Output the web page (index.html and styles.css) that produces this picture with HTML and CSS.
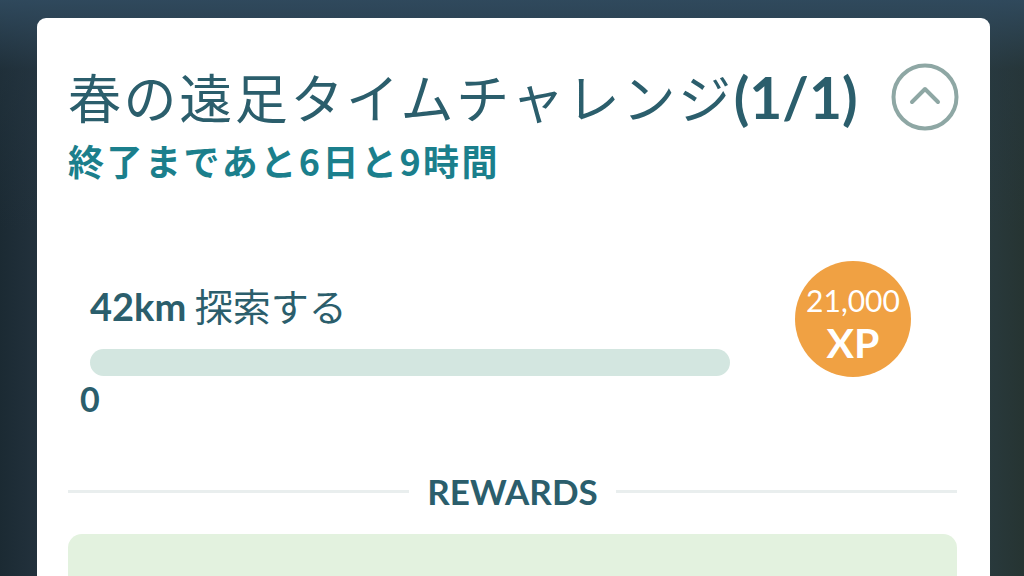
FILE: index.html
```html
<!DOCTYPE html>
<html lang="ja">
<head>
<meta charset="utf-8">
<link rel="stylesheet" href="styles.css">
</head>
<body>
<div class="screen">
  <div class="card">
    <div class="header">
      <div class="titles">
        <h1 class="title">春の遠足タイムチャレンジ<span class="count">(1/1)</span></h1>
        <div class="remaining">終了まであと6日と9時間</div>
      </div>
      <button class="collapse" aria-label="collapse">
        <svg width="70" height="70" viewBox="0 0 70 70">
          <circle cx="35" cy="35" r="31.5" fill="none" stroke="#8ea7a4" stroke-width="4"/>
          <path d="M22 40 L35 27 L48 40" fill="none" stroke="#8ea7a4" stroke-width="4" stroke-linecap="round" stroke-linejoin="round"/>
        </svg>
      </button>
    </div>
    <div class="task">
      <div class="task-main">
        <div class="task-name"><span class="km">42km</span> 探索する</div>
        <div class="bar"><div class="fill" style="width:0%"></div></div>
        <div class="progress-num">0</div>
      </div>
      <div class="xp">
        <div class="xp-amount">21,000</div>
        <div class="xp-label">XP</div>
      </div>
    </div>
    <div class="divider">
      <span class="line"></span>
      <span class="divider-text">REWARDS</span>
      <span class="line"></span>
    </div>
    <div class="rewards-box"></div>
  </div>
</div>
</body>
</html>
```
FILE: styles.css
```css
* { box-sizing: border-box; }
html, body {
  margin: 0;
  padding: 0;
  width: 1024px;
  height: 576px;
  overflow: hidden;
}
body {
  font-family: "Lato", "Noto Sans CJK JP", sans-serif;
  background: linear-gradient(90deg, #1b2a33 0%, #23323d 4%, #263845 50%, #293a3e 96%, #263432 100%);
}
.screen {
  height: 576px;
  padding: 18px 34px 0 37px;
  background: linear-gradient(180deg, rgba(48,74,94,0.95) 0%, rgba(38,56,68,0.4) 12%, rgba(0,0,0,0) 40%);
}
.card {
  width: 953px;
  height: 600px;
  background: #ffffff;
  border-radius: 9px 9px 0 0;
  padding: 0 33px 0 31px;
}
.header {
  display: flex;
  justify-content: space-between;
  align-items: flex-start;
  padding-top: 45px;
}
.title {
  margin: 0;
  font-weight: 400;
  font-size: 53px;
  line-height: 66px;
  color: #2b5e6c;
  letter-spacing: 2.6px;
  font-family: "Noto Sans CJK JP", sans-serif;
  white-space: nowrap;
}
.count {
  font-family: "Lato", sans-serif;
  font-weight: 700;
  font-size: 57px;
  letter-spacing: 0;
}
.remaining {
  margin-top: 8px;
  font-size: 36px;
  line-height: 44px;
  font-weight: 700;
  letter-spacing: 2.5px;
  color: #1b7f8c;
  font-family: "Noto Sans CJK JP", sans-serif;
  white-space: nowrap;
}
.collapse {
  margin: -1px -3px 0 0;
  padding: 0;
  border: none;
  background: none;
  width: 70px;
  height: 70px;
  flex-shrink: 0;
}
.task {
  display: flex;
  justify-content: space-between;
  align-items: flex-start;
  margin-top: 99px;
  padding-left: 22px;
  padding-right: 46px;
}
.task-main {
  width: 640px;
}
.task-name {
  font-size: 38px;
  line-height: 48px;
  color: #2b5e6c;
  font-family: "Noto Sans CJK JP", sans-serif;
  white-space: nowrap;
}
.km {
  font-family: "Lato", sans-serif;
  font-weight: 700;
}
.bar {
  margin-top: 19px;
  height: 27px;
  border-radius: 14px;
  background: #d3e6e0;
  overflow: hidden;
}
.fill {
  height: 100%;
  background: #4ab39a;
}
.progress-num {
  margin-left: -10px;
  margin-top: 3px;
  font-size: 34px;
  line-height: 40px;
  font-weight: 700;
  color: #2b5e6c;
}
.xp {
  width: 116px;
  height: 116px;
  border-radius: 50%;
  background: #f0a143;
  color: #ffffff;
  display: flex;
  flex-direction: column;
  align-items: center;
  justify-content: center;
  padding-top: 10px;
  margin-top: -20px;
  flex-shrink: 0;
}
.xp-amount {
  font-size: 30px;
  line-height: 36px;
  font-weight: 400;
}
.xp-label {
  font-size: 41px;
  line-height: 49px;
  font-weight: 700;
}
.divider {
  display: flex;
  align-items: center;
  gap: 18px;
  margin-top: 52px;
}
.line {
  flex: 1;
  height: 3px;
  background: #e9eeee;
}
.divider-text {
  font-size: 35px;
  line-height: 40px;
  font-weight: 700;
  color: #2b5e6c;
}
.rewards-box {
  margin-top: 23px;
  height: 80px;
  border-radius: 14px;
  background: #e3f2df;
}
```
